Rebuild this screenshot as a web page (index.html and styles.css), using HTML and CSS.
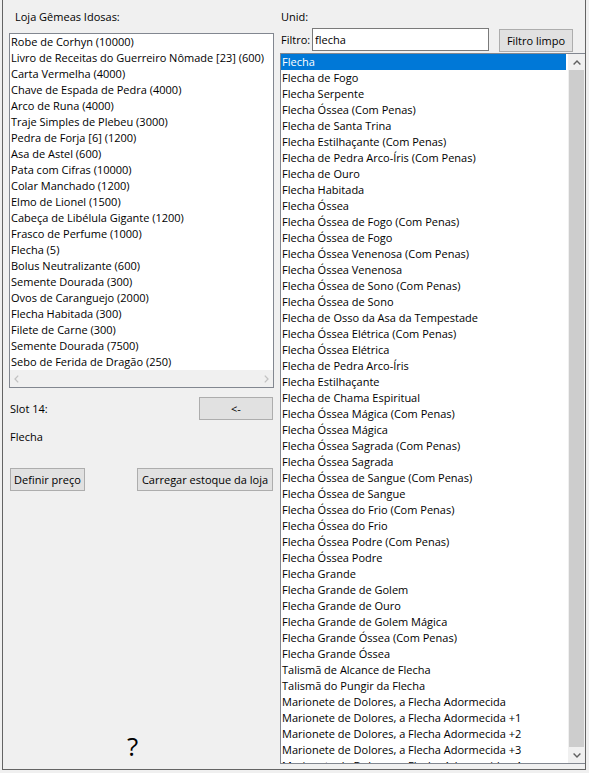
FILE: index.html
```html
<!DOCTYPE html>
<html lang="pt">
<head>
<meta charset="utf-8">
<title>Loja</title>
<link rel="stylesheet" href="styles.css">
</head>
<body>
<div class="frame">
  <section class="shop">
    <div class="title">Loja Gêmeas Idosas:</div>
    <div class="listbox shop-list">
      <ul class="items">
        <li>Robe de Corhyn (10000)</li>
        <li>Livro de Receitas do Guerreiro Nômade [23] (600)</li>
        <li>Carta Vermelha (4000)</li>
        <li>Chave de Espada de Pedra (4000)</li>
        <li>Arco de Runa (4000)</li>
        <li>Traje Simples de Plebeu (3000)</li>
        <li>Pedra de Forja [6] (1200)</li>
        <li>Asa de Astel (600)</li>
        <li>Pata com Cifras (10000)</li>
        <li>Colar Manchado (1200)</li>
        <li>Elmo de Lionel (1500)</li>
        <li>Cabeça de Libélula Gigante (1200)</li>
        <li>Frasco de Perfume (1000)</li>
        <li>Flecha (5)</li>
        <li>Bolus Neutralizante (600)</li>
        <li>Semente Dourada (300)</li>
        <li>Ovos de Caranguejo (2000)</li>
        <li>Flecha Habitada (300)</li>
        <li>Filete de Carne (300)</li>
        <li>Semente Dourada (7500)</li>
        <li>Sebo de Ferida de Dragão (250)</li>
      </ul>
      <div class="hscroll">
        <svg width="5" height="8" viewBox="0 0 5 8"><path d="M4.2 0.6 L1 4 L4.2 7.4" fill="none" stroke="#c2c2c2" stroke-width="1.3"/></svg>
        <svg width="5" height="8" viewBox="0 0 5 8"><path d="M0.8 0.6 L4 4 L0.8 7.4" fill="none" stroke="#c2c2c2" stroke-width="1.3"/></svg>
      </div>
    </div>
    <div class="slot-row">
      <span>Slot 14:</span>
      <button class="btn btn-back">&lt;-</button>
    </div>
    <div class="slot-name">Flecha</div>
    <div class="actions">
      <button class="btn btn-price">Definir preço</button>
      <button class="btn btn-load">Carregar estoque da loja</button>
    </div>
    <div class="help">?</div>
  </section>
  <section class="units">
    <div class="title unid">Unid:</div>
    <div class="filter-row">
      <label class="filter-label" for="filtro">Filtro:</label>
      <input id="filtro" class="filter-input" type="text" value="flecha">
      <button class="btn btn-clear">Filtro limpo</button>
    </div>
    <div class="listbox unit-list">
      <ul class="items">
        <li class="selected">Flecha</li>
        <li>Flecha de Fogo</li>
        <li>Flecha Serpente</li>
        <li>Flecha Óssea (Com Penas)</li>
        <li>Flecha de Santa Trina</li>
        <li>Flecha Estilhaçante (Com Penas)</li>
        <li>Flecha de Pedra Arco-Íris (Com Penas)</li>
        <li>Flecha de Ouro</li>
        <li>Flecha Habitada</li>
        <li>Flecha Óssea</li>
        <li>Flecha Óssea de Fogo (Com Penas)</li>
        <li>Flecha Óssea de Fogo</li>
        <li>Flecha Óssea Venenosa (Com Penas)</li>
        <li>Flecha Óssea Venenosa</li>
        <li>Flecha Óssea de Sono (Com Penas)</li>
        <li>Flecha Óssea de Sono</li>
        <li>Flecha de Osso da Asa da Tempestade</li>
        <li>Flecha Óssea Elétrica (Com Penas)</li>
        <li>Flecha Óssea Elétrica</li>
        <li>Flecha de Pedra Arco-Íris</li>
        <li>Flecha Estilhaçante</li>
        <li>Flecha de Chama Espiritual</li>
        <li>Flecha Óssea Mágica (Com Penas)</li>
        <li>Flecha Óssea Mágica</li>
        <li>Flecha Óssea Sagrada (Com Penas)</li>
        <li>Flecha Óssea Sagrada</li>
        <li>Flecha Óssea de Sangue (Com Penas)</li>
        <li>Flecha Óssea de Sangue</li>
        <li>Flecha Óssea do Frio (Com Penas)</li>
        <li>Flecha Óssea do Frio</li>
        <li>Flecha Óssea Podre (Com Penas)</li>
        <li>Flecha Óssea Podre</li>
        <li>Flecha Grande</li>
        <li>Flecha Grande de Golem</li>
        <li>Flecha Grande de Ouro</li>
        <li>Flecha Grande de Golem Mágica</li>
        <li>Flecha Grande Óssea (Com Penas)</li>
        <li>Flecha Grande Óssea</li>
        <li>Talismã de Alcance de Flecha</li>
        <li>Talismã do Pungir da Flecha</li>
        <li>Marionete de Dolores, a Flecha Adormecida</li>
        <li>Marionete de Dolores, a Flecha Adormecida +1</li>
        <li>Marionete de Dolores, a Flecha Adormecida +2</li>
        <li>Marionete de Dolores, a Flecha Adormecida +3</li>
        <li>Marionete de Dolores, a Flecha Adormecida +4</li>
      </ul>
      <div class="vscroll">
        <div class="arrow">
          <svg width="8" height="5" viewBox="0 0 8 5"><path d="M0.6 4.4 L4 1 L7.4 4.4" fill="none" stroke="#606060" stroke-width="1.4"/></svg>
        </div>
        <div class="thumb"></div>
        <div class="arrow">
          <svg width="8" height="5" viewBox="0 0 8 5"><path d="M0.6 0.6 L4 4 L7.4 0.6" fill="none" stroke="#606060" stroke-width="1.4"/></svg>
        </div>
      </div>
    </div>
  </section>
</div>
</body>
</html>
```

FILE: styles.css
```css
* {
  box-sizing: border-box;
}

html, body {
  margin: 0;
  padding: 0;
}

body {
  width: 589px;
  height: 773px;
  overflow: hidden;
  background: #f0f0f0;
  font-family: "Open Sans", "Noto Sans", sans-serif;
  font-size: 11px;
  color: #000;
}

.frame {
  margin-left: 2px;
  width: 584px;
  height: 770px;
  border: 1px solid #646464;
  border-top: none;
  display: grid;
  grid-template-columns: 277px 305px;
  overflow: hidden;
}

.shop {
  display: flex;
  flex-direction: column;
  padding-top: 9px;
}

.units {
  display: flex;
  flex-direction: column;
  padding-top: 9px;
}

.title {
  height: 16px;
  line-height: 16px;
  padding-left: 12px;
  white-space: nowrap;
}

.title.unid {
  padding-left: 1px;
}

.listbox {
  background: #fff;
  border: 1px solid #828790;
}

.items {
  list-style: none;
  margin: 0;
  padding: 0;
}

.items li {
  height: 16px;
  line-height: 16px;
  padding-left: 1px;
  white-space: nowrap;
}

.items li.selected {
  background: #0078d7;
  color: #fff;
}

.shop-list {
  margin: 8px 0 0 6px;
  width: 265px;
}

.shop-list .items {
  overflow: hidden;
}

.hscroll {
  height: 17px;
  background: #f0f0f0;
  display: flex;
  justify-content: space-between;
  align-items: center;
  padding: 0 4px 0 4px;
}

.btn {
  font: inherit;
  color: #000;
  background: #e1e1e1;
  border: 1px solid #adadad;
  padding: 0;
  margin: 0;
  height: 23px;
  line-height: 21px;
  white-space: nowrap;
}

.slot-row {
  display: flex;
  justify-content: space-between;
  align-items: center;
  margin-top: 9px;
  padding: 0 7px;
  line-height: 16px;
}

.btn-back {
  width: 74px;
}

.slot-name {
  margin-top: 9px;
  line-height: 16px;
  padding-left: 7px;
}

.actions {
  display: flex;
  justify-content: space-between;
  margin-top: 23px;
  padding: 0 7px;
}

.btn-price {
  width: 75px;
}

.btn-load {
  width: 136px;
}

.help {
  margin-top: 240px;
  padding-left: 124px;
  font-size: 26px;
  line-height: 30px;
}

.filter-row {
  display: flex;
  align-items: flex-start;
  margin-top: 3px;
  height: 23px;
}

.filter-label {
  width: 32px;
  padding-left: 1px;
  line-height: 23px;
}

.filter-input {
  width: 177px;
  height: 23px;
  border: 1px solid #7a7a7a;
  background: #fff;
  padding: 0 2px;
  margin: 0;
  font: inherit;
  color: #000;
  outline: none;
}

.btn-clear {
  width: 74px;
  margin-left: 10px;
  margin-top: 1px;
}

.unit-list {
  margin-top: 2px;
  width: 305px;
  height: 711px;
  border-right: none;
  display: flex;
}

.unit-list .items {
  width: 287px;
  padding-right: 2px;
  overflow: hidden;
}

.vscroll {
  width: 17px;
  background: #f0f0f0;
  display: flex;
  flex-direction: column;
}

.vscroll .arrow {
  height: 16px;
  display: flex;
  align-items: center;
  justify-content: center;
}

.vscroll .thumb {
  flex: 1;
  margin: 0 1px;
  background: #cdcdcd;
}
```
